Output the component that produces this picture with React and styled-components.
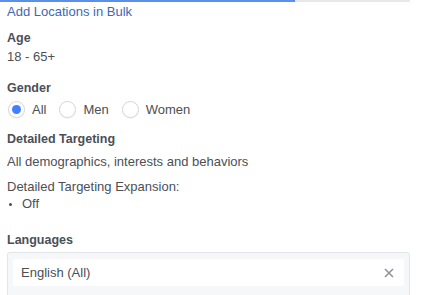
import React from "react";
import styled, { createGlobalStyle } from "styled-components";

const Global = createGlobalStyle`
  html, body { margin: 0; padding: 0; background: #fff; }
  body { font-family: "Liberation Sans", Arial, sans-serif; color: #4b4f56; }
`;

const Page = styled.div`
  width: 423px;
  height: 295px;
  overflow: hidden;
  position: relative;
`;

const TopEdge = styled.div`
  display: flex;
  height: 2px;
  width: 410px;
`;

const EdgeSeg = styled.div`
  flex: ${(p) => p.$flex};
  background: ${(p) => p.$color};
`;

const Content = styled.div`
  padding: 2px 0 0 7px;
  display: flex;
  flex-direction: column;
`;

const Link = styled.a`
  color: #4267b2;
  font-size: 13px;
  line-height: 16px;
  text-decoration: none;
`;

const Section = styled.div`
  margin-top: ${(p) => p.$top || 0}px;
  display: flex;
  flex-direction: column;
`;

const Heading = styled.div`
  font-weight: bold;
  font-size: 12.5px;
  line-height: 16px;
  color: #4b4f56;
`;

const Text = styled.div`
  font-size: 13px;
  line-height: 16px;
  color: #4b4f56;
  margin-top: ${(p) => p.$top || 0}px;
`;

const RadioRow = styled.div`
  display: flex;
  align-items: center;
  margin-top: 5px;
  margin-left: 1px;
`;

const RadioItem = styled.label`
  display: flex;
  align-items: center;
  font-size: 13px;
  color: #4b4f56;
  margin-right: 13px;
`;

const Circle = styled.span`
  width: 17px;
  height: 17px;
  border-radius: 50%;
  border: 1px solid #d3d6db;
  box-shadow: 0 1px 1px rgba(0, 0, 0, 0.05);
  box-sizing: border-box;
  display: flex;
  align-items: center;
  justify-content: center;
  margin-right: 7px;
  background: #fff;
  &::after {
    content: "";
    display: ${(p) => (p.$checked ? "block" : "none")};
    width: 9px;
    height: 9px;
    border-radius: 50%;
    background: #4080ff;
  }
`;

const Bullet = styled.ul`
  margin: 1px 0 0 0;
  padding: 0 0 0 15px;
  font-size: 13px;
  line-height: 16px;
  li::marker { font-size: 10px; }
`;

const Field = styled.div`
  margin-top: 4px;
  width: 403px;
  box-sizing: border-box;
  border: 1px solid #e3e5e8;
  border-radius: 3px;
  background: #f6f7f9;
  padding: 6px 5px 0 5px;
  height: 46px;
`;

const Inner = styled.div`
  background: #fff;
  border-radius: 2px;
  height: 27px;
  display: flex;
  align-items: center;
  justify-content: space-between;
  padding: 0 10px 0 8px;
  font-size: 13px;
  color: #4b4f56;
`;

const Close = styled.svg`
  width: 10px;
  height: 10px;
`;

export default function App() {
  return (
    <Page>
      <Global />
      <TopEdge>
        <EdgeSeg $flex={295} $color="#5b8fe8" />
        <EdgeSeg $flex={115} $color="#e6e8eb" />
      </TopEdge>
      <Content>
        <Link href="#">Add Locations in Bulk</Link>
        <Section $top={10}>
          <Heading>Age</Heading>
          <Text $top={3}>18 - 65+</Text>
        </Section>
        <Section $top={15}>
          <Heading>Gender</Heading>
          <RadioRow>
            <RadioItem><Circle $checked />All</RadioItem>
            <RadioItem><Circle />Men</RadioItem>
            <RadioItem><Circle />Women</RadioItem>
          </RadioRow>
        </Section>
        <Section $top={13}>
          <Heading>Detailed Targeting</Heading>
          <Text $top={7}>All demographics, interests and behaviors</Text>
          <Text $top={9}>Detailed Targeting Expansion:</Text>
          <Bullet><li>Off</li></Bullet>
        </Section>
        <Section $top={20}>
          <Heading>Languages</Heading>
          <Field>
            <Inner>
              English (All)
              <Close viewBox="0 0 10 10">
                <path d="M1 1L9 9M9 1L1 9" stroke="#90949c" strokeWidth="1.6" />
              </Close>
            </Inner>
          </Field>
        </Section>
      </Content>
    </Page>
  );
}
